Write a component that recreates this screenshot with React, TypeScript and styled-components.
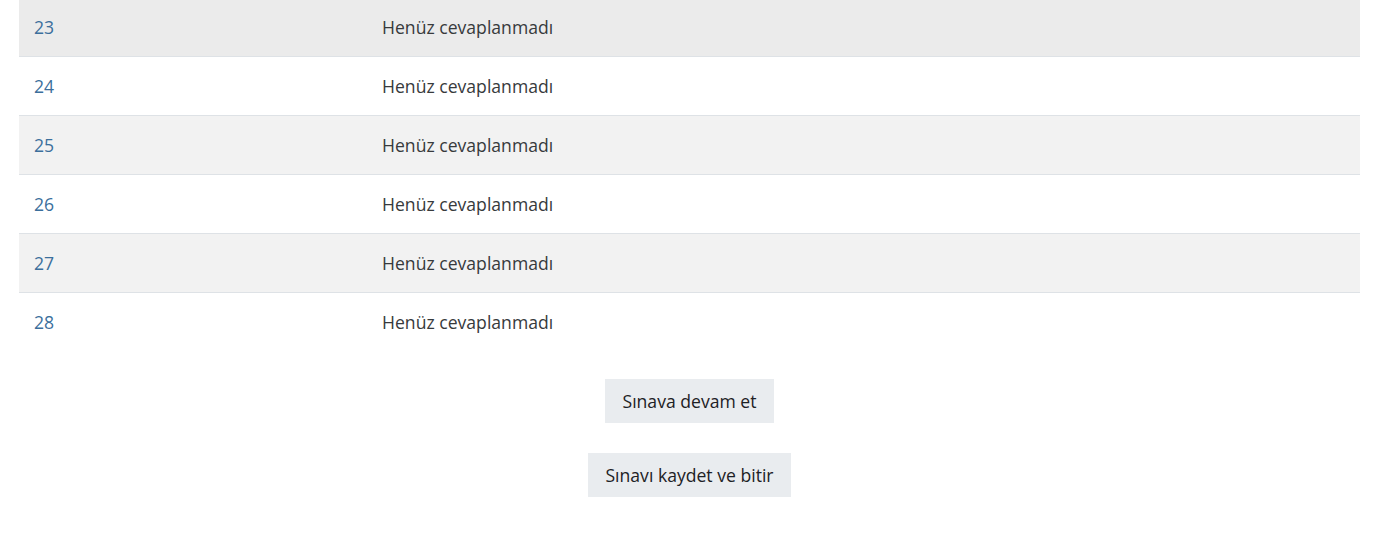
import React from "react";
import styled, { createGlobalStyle } from "styled-components";

const Global = createGlobalStyle`
  html, body { margin: 0; padding: 0; background: #fff; }
  body { font-family: "Open Sans", "Noto Sans", sans-serif; color: #373a3c; }
`;

const Page = styled.div`
  padding: 0 16px 0 19px;
`;

const Table = styled.div`
  margin-top: -3px;
  display: flex;
  flex-direction: column;
`;

const Row = styled.div<{ $bg: string }>`
  display: grid;
  grid-template-columns: 348px 1fr;
  height: 58px;
  align-items: center;
  background: ${(p) => p.$bg};
  border-top: 1px solid #dee2e6;
`;

const Num = styled.a`
  padding-left: 15px;
  color: #3b6f9c;
  font-size: 17.6px;
  text-decoration: none;
`;

const Status = styled.span`
  padding-left: 15px;
  font-size: 17.6px;
  color: #373a3c;
`;

const Actions = styled.div`
  display: flex;
  flex-direction: column;
  align-items: center;
  gap: 30px;
  margin-top: 28px;
`;

const Button = styled.button`
  height: 44px;
  padding: 0 17px;
  border: none;
  border-radius: 0;
  background: #e9ecef;
  color: #1d2125;
  font-family: "Open Sans", "Noto Sans", sans-serif;
  font-size: 17.6px;
`;

const rows = [23, 24, 25, 26, 27, 28];

export default function App() {
  return (
    <>
      <Global />
      <Page>
        <Table>
          {rows.map((n, i) => (
            <Row key={n} $bg={i === 0 ? "#ebebeb" : i % 2 === 0 ? "#f2f2f2" : "#ffffff"}>
              <Num href="#">{n}</Num>
              <Status>Henüz cevaplanmadı</Status>
            </Row>
          ))}
        </Table>
        <Actions>
          <Button>Sınava devam et</Button>
          <Button>Sınavı kaydet ve bitir</Button>
        </Actions>
      </Page>
    </>
  );
}
